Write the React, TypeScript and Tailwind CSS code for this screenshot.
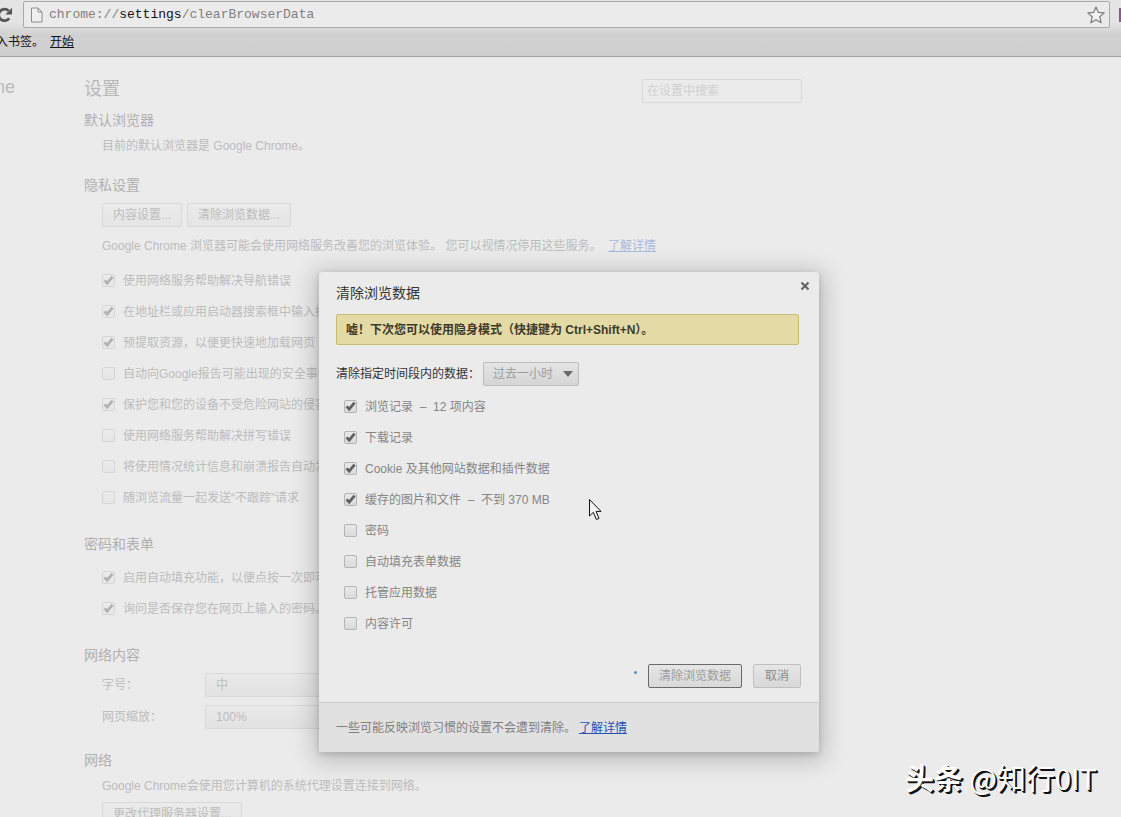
import React from 'react';

interface CheckItem {
  label: string;
  checked: boolean;
}

const privacyItems: CheckItem[] = [
  { label: '使用网络服务帮助解决导航错误', checked: true },
  { label: '在地址栏或应用启动器搜索框中输入搜索字词', checked: true },
  { label: '预提取资源，以便更快速地加载网页', checked: true },
  { label: '自动向Google报告可能出现的安全事件', checked: false },
  { label: '保护您和您的设备不受危险网站的侵害', checked: true },
  { label: '使用网络服务帮助解决拼写错误', checked: false },
  { label: '将使用情况统计信息和崩溃报告自动发送', checked: false },
  { label: '随浏览流量一起发送“不跟踪”请求', checked: false },
];

const passwordItems: CheckItem[] = [
  { label: '启用自动填充功能，以便点按一次即可', checked: true },
  { label: '询问是否保存您在网页上输入的密码。', checked: true },
];

const clearItems: CheckItem[] = [
  { label: '浏览记录  –  12 项内容', checked: true },
  { label: '下载记录', checked: true },
  { label: 'Cookie 及其他网站数据和插件数据', checked: true },
  { label: '缓存的图片和文件  –  不到 370 MB', checked: true },
  { label: '密码', checked: false },
  { label: '自动填充表单数据', checked: false },
  { label: '托管应用数据', checked: false },
  { label: '内容许可', checked: false },
];

const CheckRow: React.FC<{ item: CheckItem; faded?: boolean }> = ({ item, faded }) => (
  <label className={`flex h-[31px] items-center gap-2 whitespace-pre ${faded ? 'text-[#bcbcbc]' : 'text-[#858585]'}`}>
    <span className="relative flex">
      <input
        type="checkbox"
        defaultChecked={item.checked}
        className={`size-[13px] appearance-none rounded-xs border bg-linear-to-b ${
          faded ? 'border-[#d6d6d6] from-[#ebebeb] to-[#e6e6e6]' : 'border-[#b4b4b4] from-[#e9e9e9] to-[#dadada]'
        }`}
      />
      {item.checked && (
        <svg viewBox="0 0 13 13" className={`pointer-events-none absolute inset-0 size-[13px] ${faded ? 'text-[#b2b2b2]' : 'text-[#606060]'}`}>
          <path d="M2.6 6.4 L5.2 9.2 L10.6 2.6" fill="none" stroke="currentColor" strokeWidth="2.8" />
        </svg>
      )}
    </span>
    <span>{item.label}</span>
  </label>
);

const PageButton: React.FC<{ children: React.ReactNode }> = ({ children }) => (
  <button className="h-6 rounded-xs border border-[#d8d8d8] bg-linear-to-b from-[#ebebeb] to-[#e5e5e5] px-[10px] text-[#bcbcbc]">
    {children}
  </button>
);

const Section: React.FC<{ title: string; children: React.ReactNode }> = ({ title, children }) => (
  <section>
    <h3 className="mb-2 text-sm leading-5 text-[#b0b0b0]">{title}</h3>
    <div className="pl-[18px]">{children}</div>
  </section>
);

const Toolbar: React.FC = () => (
  <header className="shrink-0 border-b border-[#a2a2a2] bg-linear-to-b from-[#e4e4e4] from-40% via-[#d2d2d2] via-60% to-[#cdcdcd]">
    <div className="flex h-7 items-center gap-[9px] pt-px">
      <button aria-label="重新加载" className="-ml-1 flex w-[18px] text-[#555555]">
        <svg viewBox="0 0 18 18" className="size-[18px]">
          <path d="M13.2 12.2 A5.8 5.8 0 1 1 12.6 4.8" fill="none" stroke="currentColor" strokeWidth="2.8" />
          <path d="M16 1.8 V8.4 H9.4 Z" fill="currentColor" />
        </svg>
      </button>
      <div className="flex h-[27px] flex-1 items-center gap-[5px] rounded-xs border border-[#a9a9a9] bg-[#ebebeb] pr-1 pl-[6px]">
        <svg viewBox="0 0 14 16" className="h-4 w-[14px]">
          <path d="M1.5 1 H8 L12 5 V15 H1.5 Z" fill="#efefef" stroke="#8c8c8c" />
          <path d="M8 1 V5 H12" fill="none" stroke="#8c8c8c" />
        </svg>
        <p className="flex-1 font-['Liberation_Mono',monospace] text-[13px] text-[#808080]">
          chrome://<span className="text-[#111111]">settings</span>/clearBrowserData
        </p>
        <button aria-label="收藏" className="flex">
          <svg viewBox="0 0 18 18" className="size-[18px]">
            <path
              d="M9 1 L11.4 6.4 L17.2 6.9 L12.8 10.8 L14.2 16.8 L9 13.7 L3.8 16.8 L5.2 10.8 L0.8 6.9 L6.6 6.4 Z"
              fill="#f1f1f1"
              stroke="#7c7c7c"
              strokeWidth="1.2"
              strokeLinejoin="round"
            />
          </svg>
        </button>
      </div>
      <div className="h-[14px] w-[2px] bg-[#94509a]" />
    </div>
    <div className="-ml-1 flex h-7 items-center gap-[6px] text-xs text-[#111111]">
      <span>入书签。</span>
      <a href="#import" className="underline">开始</a>
    </div>
  </header>
);

const SettingsPage: React.FC = () => (
  <div className="flex text-[#bcbcbc]">
    <aside className="w-[84px] shrink-0 pt-5">
      <div className="flex w-[15px] justify-end overflow-hidden text-lg leading-5">
        <span>Chrome</span>
      </div>
    </aside>
    <div className="w-[718px] pt-[22px]">
      <div className="mb-[7px] flex justify-between">
        <h2 className="text-lg leading-5 text-[#b8b8b8]">设置</h2>
        <input
          type="search"
          aria-label="在设置中搜索"
          placeholder="在设置中搜索"
          className="h-6 w-40 rounded-xs border border-[#d9d9d9] px-1 placeholder:text-[#d0d0d0]"
        />
      </div>
      <div className="flex flex-col gap-[21px]">
        <Section title="默认浏览器">
          <p>目前的默认浏览器是 Google Chrome。</p>
        </Section>
        <Section title="隐私设置">
          <div className="mb-[11px] flex gap-[5px]">
            <PageButton>内容设置...</PageButton>
            <PageButton>清除浏览数据...</PageButton>
          </div>
          <p className="mb-[11px] whitespace-pre">
            Google Chrome 浏览器可能会使用网络服务改善您的浏览体验。 您可以视情况停用这些服务。{'  '}
            <a href="#privacy" className="text-[#a9b9dc] underline">了解详情</a>
          </p>
          {privacyItems.map(item => <CheckRow key={item.label} item={item} faded />)}
        </Section>
        <Section title="密码和表单">
          {passwordItems.map(item => <CheckRow key={item.label} item={item} faded />)}
        </Section>
        <Section title="网络内容">
          <div className="flex flex-col gap-2">
            <div className="flex items-center">
              <label htmlFor="font-size" className="w-[103px]">字号：</label>
              <select id="font-size" className="h-6 w-40 appearance-none rounded-xs border border-[#d8d8d8] bg-linear-to-b from-[#e9e9e9] to-[#e2e2e2] px-[10px]">
                <option>中</option>
              </select>
            </div>
            <div className="flex items-center">
              <label htmlFor="page-zoom" className="w-[103px]">网页缩放：</label>
              <select id="page-zoom" className="h-6 w-40 appearance-none rounded-xs border border-[#d8d8d8] bg-linear-to-b from-[#e9e9e9] to-[#e2e2e2] px-[10px]">
                <option>100%</option>
              </select>
            </div>
          </div>
        </Section>
        <Section title="网络">
          <p className="mb-2">Google Chrome会使用您计算机的系统代理设置连接到网络。</p>
          <PageButton>更改代理服务器设置...</PageButton>
        </Section>
      </div>
    </div>
  </div>
);

const ClearDataDialog: React.FC = () => (
  <div role="dialog" aria-labelledby="dialog-title" className="relative w-[500px] rounded-[3px] bg-[#ebebeb] shadow-[0_4px_23px_5px_rgba(0,0,0,0.2),0_2px_6px_rgba(0,0,0,0.15)]">
    <button aria-label="关闭" className="absolute top-[9px] right-[9px] flex text-[#666666]">
      <svg viewBox="0 0 10 10" className="size-[10px]">
        <path d="M1.5 1.5 L8.5 8.5 M8.5 1.5 L1.5 8.5" fill="none" stroke="currentColor" strokeWidth="2.2" />
      </svg>
    </button>
    <div className="px-[17px] pt-[11px] pb-[14px]">
      <h1 id="dialog-title" className="text-sm leading-5 text-[#333333]">清除浏览数据</h1>
      <div className="mt-[11px] mr-[3px] flex h-[31px] items-center rounded-xs border border-[#cbbb6c] bg-[#e4daa6] px-[9px] font-bold text-[#3d3a2c]">
        嘘！下次您可以使用隐身模式（快捷键为 Ctrl+Shift+N）。
      </div>
      <div className="mt-[17px] mb-[5px] flex items-center gap-[3px] text-[#333333]">
        <label htmlFor="time-range">清除指定时间段内的数据：</label>
        <div className="relative">
          <select id="time-range" className="h-6 w-24 appearance-none rounded-xs border border-[#bdbdbd] bg-linear-to-b from-[#e5e5e5] to-[#d5d5d5] px-[9px] text-[#9c9c9c]">
            <option>过去一小时</option>
          </select>
          <svg viewBox="0 0 10 6" className="pointer-events-none absolute top-[9px] right-[6px] h-[6px] w-[10px]">
            <path d="M0 0 H10 L5 6 Z" fill="#6b6b6b" />
          </svg>
        </div>
      </div>
      <div className="pl-2">
        {clearItems.map(item => <CheckRow key={item.label} item={item} />)}
      </div>
      <div className="mt-[25px] flex items-center justify-end gap-[11px] pr-px">
        <span className="mb-2 size-[3px] rounded-full bg-[#4a90cf]" />
        <button className="h-6 rounded-xs border border-[#6a6a6a] bg-linear-to-b from-[#e6e6e6] to-[#d8d8d8] px-[10px] text-[#9c9c9c]">
          清除浏览数据
        </button>
        <button className="h-6 rounded-xs border border-[#c0c0c0] bg-linear-to-b from-[#e6e6e6] to-[#d8d8d8] px-[11px] text-[#8a8a8a]">
          取消
        </button>
      </div>
    </div>
    <footer className="flex h-[50px] items-center gap-[3px] rounded-b-[3px] border-t border-[#cccccc] bg-[#e1e1e1] px-[17px] text-[#808080]">
      <span>一些可能反映浏览习惯的设置不会遭到清除。</span>
      <a href="#learn-more" className="text-[#2450b8] underline">了解详情</a>
    </footer>
  </div>
);

const App: React.FC = () => (
  <div className="flex h-screen flex-col overflow-hidden bg-[#ebebeb] font-['Liberation_Sans','Noto_Sans_CJK_SC',sans-serif]">
    <Toolbar />
    <main className="relative min-h-0 flex-1 overflow-hidden text-xs">
      <SettingsPage />
      <div className="absolute inset-0 flex items-start justify-center pt-[215px] pl-[17px]">
        <ClearDataDialog />
      </div>
      <svg viewBox="0 0 13 22" className="pointer-events-none absolute top-[442px] left-[589px] h-[22px] w-[13px]">
        <path d="M0.5 0.5 V17 L4.3 13.3 L7.4 20.5 L10 19.4 L7 12.4 H12 Z" fill="#f4f4f4" stroke="#111111" />
      </svg>
      <p className="absolute right-6 bottom-[22px] font-['Noto_Sans_CJK_SC',sans-serif] text-[29px] leading-9 text-white [text-shadow:1px_1px_0_#111,2px_2px_0_#111]">
        <span className="font-bold">头条</span> @知行0IT
      </p>
    </main>
  </div>
);

export default App;
